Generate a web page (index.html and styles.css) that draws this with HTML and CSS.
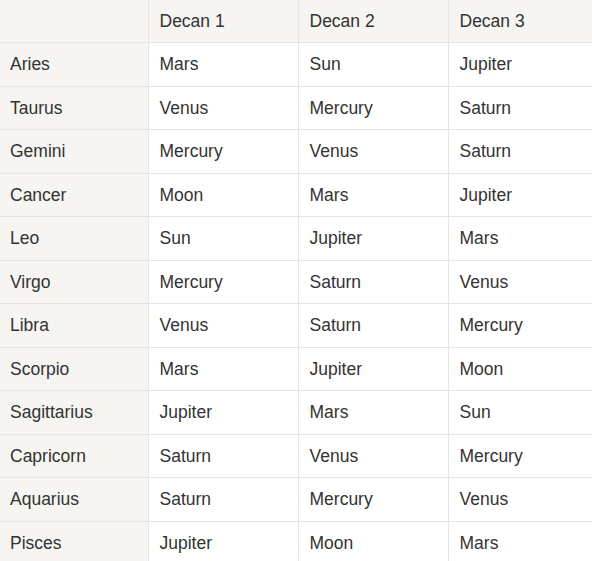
FILE: index.html
```html
<!DOCTYPE html>
<html>
<head>
<meta charset="utf-8">
<link rel="stylesheet" href="styles.css">
</head>
<body>
<table class="decans">
  <colgroup>
    <col class="c-sign">
    <col class="c-decan">
    <col class="c-decan">
    <col>
  </colgroup>
  <thead>
    <tr><th></th><th>Decan 1</th><th>Decan 2</th><th>Decan 3</th></tr>
  </thead>
  <tbody>
    <tr><th>Aries</th><td>Mars</td><td>Sun</td><td>Jupiter</td></tr>
    <tr><th>Taurus</th><td>Venus</td><td>Mercury</td><td>Saturn</td></tr>
    <tr><th>Gemini</th><td>Mercury</td><td>Venus</td><td>Saturn</td></tr>
    <tr><th>Cancer</th><td>Moon</td><td>Mars</td><td>Jupiter</td></tr>
    <tr><th>Leo</th><td>Sun</td><td>Jupiter</td><td>Mars</td></tr>
    <tr><th>Virgo</th><td>Mercury</td><td>Saturn</td><td>Venus</td></tr>
    <tr><th>Libra</th><td>Venus</td><td>Saturn</td><td>Mercury</td></tr>
    <tr><th>Scorpio</th><td>Mars</td><td>Jupiter</td><td>Moon</td></tr>
    <tr><th>Sagittarius</th><td>Jupiter</td><td>Mars</td><td>Sun</td></tr>
    <tr><th>Capricorn</th><td>Saturn</td><td>Venus</td><td>Mercury</td></tr>
    <tr><th>Aquarius</th><td>Saturn</td><td>Mercury</td><td>Venus</td></tr>
    <tr><th>Pisces</th><td>Jupiter</td><td>Moon</td><td>Mars</td></tr>
  </tbody>
</table>
</body>
</html>
```
FILE: styles.css
```css
html, body {
  margin: 0;
  padding: 0;
  background: #ffffff;
}
.decans {
  width: 100%;
  border-collapse: collapse;
  table-layout: fixed;
  font-family: "Liberation Sans", Arial, sans-serif;
  font-size: 17.5px;
  color: #333333;
}
.c-sign { width: 148px; }
.c-decan { width: 150px; }
.decans th,
.decans td {
  font-weight: normal;
  text-align: left;
  padding: 11px 10px 11px 11px;
  line-height: 20.5px;
  border-right: 1px solid #e6e5e1;
  border-bottom: 1px solid #e6e5e1;
  white-space: nowrap;
}
.decans th:last-child,
.decans td:last-child {
  border-right: none;
}
.decans thead th {
  background: #f6f5f1;
  padding-top: 10.5px;
  padding-bottom: 11px;
}
.decans tbody th {
  background: #f6f5f1;
  padding-left: 10px;
}
```
